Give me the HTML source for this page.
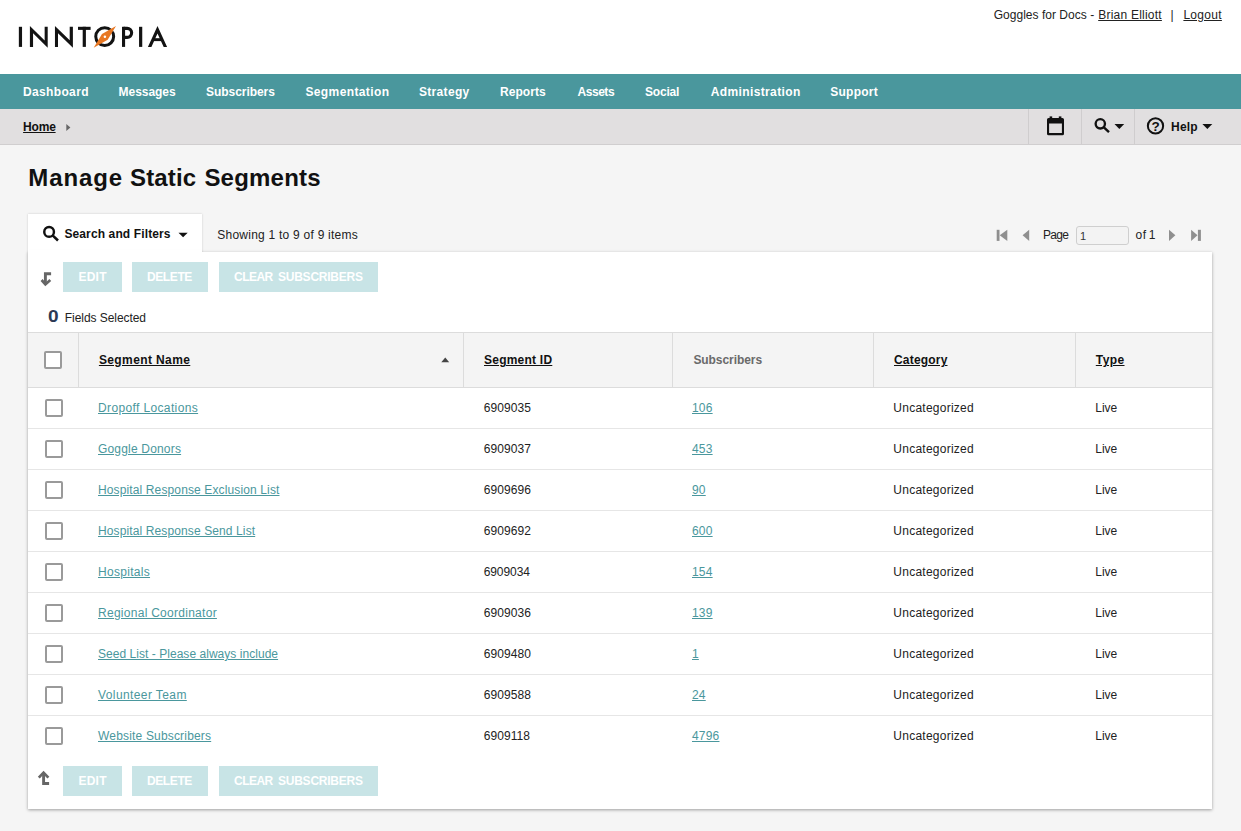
<!DOCTYPE html>
<html><head><meta charset="utf-8"><title>Manage Static Segments</title>
<style>
html,body{margin:0;padding:0}
body{width:1241px;height:831px;position:relative;overflow:hidden;background:#f5f5f5;font-family:"Liberation Sans",sans-serif;font-size:12px;color:#222}
.a{position:absolute}
.t{position:absolute;white-space:pre;font-family:"Liberation Sans",sans-serif}
#hdr{left:0;top:0;width:1241px;height:74px;background:#fff}
#nav{left:0;top:74px;width:1241px;height:35px;background:#4a979d}
#crumb{left:0;top:109px;width:1241px;height:35px;background:#e1dfe0;border-bottom:1px solid #d0cecf}
.vsep{top:109px;width:1px;height:35px;background:#cfcdce}
#tab{left:28px;top:214px;width:174px;height:40px;background:#fff;box-shadow:0 0 2px rgba(0,0,0,.18)}
#panel{left:28px;top:252px;width:1184px;height:557px;background:#fff;box-shadow:0 1px 3px rgba(0,0,0,.36)}
#tabcover{left:28px;top:250px;width:174px;height:6px;background:#fff}
.btn{height:30px;background:#c8e4e6}
#thead{left:28px;top:332px;width:1184px;height:54px;background:#f4f4f4;border-top:1px solid #dcdcdc;border-bottom:1px solid #dcdcdc}
.csep{top:333px;width:1px;height:54px;background:#dcdcdc}
.rsep{left:28px;width:1184px;height:1px;background:#e6e6e6}
.cb{width:14px;height:14px;border:2px solid #9a9a9a;border-radius:2px;background:#fff}
#pin{left:1076px;top:226px;width:51px;height:17px;border:1px solid #cfcfcf;border-radius:3px;background:#f3f3f3}
</style></head><body>
<div class="a" id="hdr"></div>
<div class="a" id="nav"></div>
<div class="a" id="crumb"></div>
<div class="a vsep" style="left:1028px"></div>
<div class="a vsep" style="left:1081px"></div>
<div class="a vsep" style="left:1134px"></div>
<div class="a" id="tab"></div>
<div class="a" id="panel"></div>
<div class="a" id="tabcover"></div>
<div class="a btn" style="left:63px;top:262px;width:59px"></div>
<div class="a btn" style="left:132px;top:262px;width:76px"></div>
<div class="a btn" style="left:219px;top:262px;width:159px"></div>
<div class="a btn" style="left:63px;top:766px;width:59px"></div>
<div class="a btn" style="left:132px;top:766px;width:76px"></div>
<div class="a btn" style="left:219px;top:766px;width:159px"></div>
<div class="a" id="thead"></div>
<div class="a csep" style="left:78px"></div>
<div class="a csep" style="left:463px"></div>
<div class="a csep" style="left:672px"></div>
<div class="a csep" style="left:873px"></div>
<div class="a csep" style="left:1075px"></div>
<div class="a rsep" style="top:428px"></div>
<div class="a rsep" style="top:469px"></div>
<div class="a rsep" style="top:510px"></div>
<div class="a rsep" style="top:551px"></div>
<div class="a rsep" style="top:592px"></div>
<div class="a rsep" style="top:633px"></div>
<div class="a rsep" style="top:674px"></div>
<div class="a rsep" style="top:715px"></div>
<div class="a cb" style="left:44px;top:351px"></div>
<div class="a cb" style="left:45px;top:399px"></div>
<div class="a cb" style="left:45px;top:440px"></div>
<div class="a cb" style="left:45px;top:481px"></div>
<div class="a cb" style="left:45px;top:522px"></div>
<div class="a cb" style="left:45px;top:563px"></div>
<div class="a cb" style="left:45px;top:604px"></div>
<div class="a cb" style="left:45px;top:645px"></div>
<div class="a cb" style="left:45px;top:686px"></div>
<div class="a cb" style="left:45px;top:727px"></div>
<div class="a" id="pin"></div>
<!--ICONS-START-->
<svg class="a" style="left:0;top:0" width="1241" height="831" viewBox="0 0 1241 831">
<!-- logo -->
<g fill="#131313">
<rect x="18.85" y="26.8" width="3.2" height="20.1"/>
<polygon points="29.9,25.9 29.9,46.9 33.06,46.9 33.06,33.37 47.7,47.8 47.7,26.8 44.66,26.8 44.66,40.45"/>
<polygon points="54.96,25.9 54.96,46.9 58.0,46.9 58.0,33.3 72.9,47.8 72.9,26.8 69.7,26.8 69.7,40.3"/>
<rect x="78" y="26.8" width="12.6" height="3.1"/>
<rect x="82.7" y="26.8" width="3.2" height="20.1"/>
<rect x="122" y="26.8" width="3.1" height="20.1"/>
<rect x="139.05" y="26.8" width="3.2" height="20.1"/>
<polygon points="147.9,46.9 157.5,25.9 167.1,46.9 163.7,46.9 157.5,33.4 151.4,46.9"/>
<rect x="153.5" y="38.2" width="8.2" height="2.9"/>
</g>
<circle cx="104.7" cy="36.6" r="8.95" fill="none" stroke="#131313" stroke-width="3"/>
<path d="M123.5 28.35 H127.15 a4.5 4.5 0 0 1 0 9 H123.5" fill="none" stroke="#131313" stroke-width="3.1"/>
<polygon points="93.7,47.8 102.0,33.9 116,25.9 107.7,39.8" fill="#e87722"/>
<circle cx="104.9" cy="36.8" r="1.25" fill="#fff"/>
<!-- breadcrumb arrow -->
<polygon points="66.3,124 70.4,127.5 66.3,131" fill="#666"/>
<!-- calendar -->
<g fill="#111">
<rect x="1049.6" y="116.4" width="2.6" height="3"/>
<rect x="1058.8" y="116.4" width="2.6" height="3"/>
<path fill-rule="evenodd" d="M1048.6 117.9 H1062.4 a1.6 1.6 0 0 1 1.6 1.6 V133.7 a1.6 1.6 0 0 1 -1.6 1.6 H1048.6 a1.6 1.6 0 0 1 -1.6 -1.6 V119.5 a1.6 1.6 0 0 1 1.6 -1.6 Z M1049.1 123.4 V133.1 H1061.9 V123.4 Z"/>
</g>
<!-- search (crumb) -->
<circle cx="1100.3" cy="123.8" r="4.65" fill="none" stroke="#111" stroke-width="2.35"/>
<line x1="1103.6" y1="127.1" x2="1109" y2="132.2" stroke="#111" stroke-width="2.4"/>
<polygon points="1114.5,124 1124.2,124 1119.35,128.9" fill="#111"/>
<!-- help -->
<circle cx="1155.5" cy="125.9" r="7.65" fill="none" stroke="#111" stroke-width="2"/>
<text x="1155.5" y="130.7" text-anchor="middle" font-family="Liberation Sans, sans-serif" font-weight="bold" font-size="13.5" fill="#111">?</text>
<polygon points="1202.4,124 1212.3,124 1207.35,128.9" fill="#111"/>
<!-- tab search -->
<circle cx="49.1" cy="231.9" r="4.85" fill="none" stroke="#111" stroke-width="2.45"/>
<line x1="52.6" y1="235.4" x2="58" y2="240.5" stroke="#111" stroke-width="2.6"/>
<polygon points="178.5,232.8 187.7,232.8 183.1,237.3" fill="#111"/>
<!-- pager -->
<g fill="#8f8f8f">
<rect x="996.7" y="229.8" width="2.8" height="11.1"/>
<polygon points="1007.3,229.8 1007.3,240.9 999.7,235.35"/>
<polygon points="1029.2,229.8 1029.2,240.9 1022.6,235.35"/>
<polygon points="1169,229.8 1169,240.9 1175.4,235.35"/>
<polygon points="1191.1,229.8 1191.1,240.9 1197.5,235.35"/>
<rect x="1197.9" y="229.8" width="3" height="11.1"/>
</g>
<!-- sort arrow -->
<polygon points="441.3,362.2 449.2,362.2 445.25,357.4" fill="#444"/>
<!-- level-down arrow -->
<g fill="none" stroke="#666" stroke-width="2.9">
<path d="M51.1 273.7 H45.4 V283.5"/>
<path d="M41.6 280 L45.4 284.4 L50.3 280" stroke-width="2.7"/>
<path d="M49.1 783.5 H43.6 V773.5"/>
<path d="M38.8 777.6 L43.55 772.6 L48.4 777.6" stroke-width="2.7"/>
</g>
</svg>
<!--ICONS-END-->
<span class="t" style="line-height:16px;left:993.70px;top:7px;font-size:12px;color:#222222;letter-spacing:0.024px;">Goggles for Docs -</span>
<span class="t" style="line-height:16px;left:1098.20px;top:7px;font-size:12px;color:#222222;letter-spacing:0.231px;text-decoration:underline;">Brian Elliott</span>
<span class="t" style="line-height:16px;left:1170.60px;top:7px;font-size:12px;color:#222222;">|</span>
<span class="t" style="line-height:16px;left:1183.40px;top:7px;font-size:12px;color:#222222;letter-spacing:0.299px;text-decoration:underline;">Logout</span>
<span class="t" style="line-height:16px;left:23.00px;top:84px;font-size:12px;color:#ffffff;font-weight:bold;letter-spacing:0.350px;">Dashboard</span>
<span class="t" style="line-height:16px;left:118.60px;top:84px;font-size:12px;color:#ffffff;font-weight:bold;letter-spacing:-0.057px;">Messages</span>
<span class="t" style="line-height:16px;left:206.00px;top:84px;font-size:12px;color:#ffffff;font-weight:bold;letter-spacing:-0.050px;">Subscribers</span>
<span class="t" style="line-height:16px;left:305.40px;top:84px;font-size:12px;color:#ffffff;font-weight:bold;letter-spacing:0.391px;">Segmentation</span>
<span class="t" style="line-height:16px;left:418.90px;top:84px;font-size:12px;color:#ffffff;font-weight:bold;letter-spacing:0.329px;">Strategy</span>
<span class="t" style="line-height:16px;left:499.90px;top:84px;font-size:12px;color:#ffffff;font-weight:bold;letter-spacing:0.083px;">Reports</span>
<span class="t" style="line-height:16px;left:577.50px;top:84px;font-size:12px;color:#ffffff;font-weight:bold;letter-spacing:-0.460px;">Assets</span>
<span class="t" style="line-height:16px;left:645.00px;top:84px;font-size:12px;color:#ffffff;font-weight:bold;letter-spacing:-0.180px;">Social</span>
<span class="t" style="line-height:16px;left:710.80px;top:84px;font-size:12px;color:#ffffff;font-weight:bold;letter-spacing:0.369px;">Administration</span>
<span class="t" style="line-height:16px;left:830.30px;top:84px;font-size:12px;color:#ffffff;font-weight:bold;letter-spacing:0.233px;">Support</span>
<span class="t" style="line-height:16px;left:23.10px;top:119px;font-size:12px;color:#111;font-weight:bold;letter-spacing:-0.211px;text-decoration:underline;">Home</span>
<span class="t" style="line-height:16px;left:1171.10px;top:119px;font-size:12px;color:#111;font-weight:bold;letter-spacing:0.167px;">Help</span>
<span class="t" style="line-height:34px;left:28.30px;top:161px;font-size:24px;color:#111;font-weight:bold;letter-spacing:0.880px;">Manage</span>
<span class="t" style="line-height:34px;left:130.00px;top:161px;font-size:24px;color:#111;font-weight:bold;letter-spacing:0.140px;">Static</span>
<span class="t" style="line-height:34px;left:204.40px;top:161px;font-size:24px;color:#111;font-weight:bold;letter-spacing:0.214px;">Segments</span>
<span class="t" style="line-height:16px;left:64.40px;top:226px;font-size:12px;color:#111;font-weight:bold;letter-spacing:0.124px;">Search and Filters</span>
<span class="t" style="line-height:16px;left:217.30px;top:227px;font-size:12px;color:#222222;letter-spacing:0.237px;">Showing 1 to 9 of 9 items</span>
<span class="t" style="line-height:16px;left:1043.00px;top:227px;font-size:12px;color:#222222;letter-spacing:-0.733px;">Page</span>
<span class="t" style="line-height:16px;left:1135.40px;top:227px;font-size:12px;color:#222222;letter-spacing:0.600px;">of</span>
<span class="t" style="line-height:16px;left:1148.70px;top:227px;font-size:12px;color:#222222;">1</span>
<span class="t" style="line-height:16px;left:1080.00px;top:228px;font-size:11px;color:#333;">1</span>
<span class="t" style="line-height:16px;left:78.40px;top:269px;font-size:12px;color:#ffffff;font-weight:bold;letter-spacing:0.267px;">EDIT</span>
<span class="t" style="line-height:16px;left:147.00px;top:269px;font-size:12px;color:#ffffff;font-weight:bold;letter-spacing:-0.400px;">DELETE</span>
<span class="t" style="line-height:16px;left:234.05px;top:269px;font-size:12px;color:#ffffff;font-weight:bold;letter-spacing:-0.538px;">CLEAR</span>
<span class="t" style="line-height:16px;left:278.00px;top:269px;font-size:12px;color:#ffffff;font-weight:bold;letter-spacing:-0.240px;">SUBSCRIBERS</span>
<span class="t" style="line-height:16px;left:78.40px;top:773px;font-size:12px;color:#ffffff;font-weight:bold;letter-spacing:0.267px;">EDIT</span>
<span class="t" style="line-height:16px;left:147.00px;top:773px;font-size:12px;color:#ffffff;font-weight:bold;letter-spacing:-0.400px;">DELETE</span>
<span class="t" style="line-height:16px;left:234.05px;top:773px;font-size:12px;color:#ffffff;font-weight:bold;letter-spacing:-0.538px;">CLEAR</span>
<span class="t" style="line-height:16px;left:278.00px;top:773px;font-size:12px;color:#ffffff;font-weight:bold;letter-spacing:-0.240px;">SUBSCRIBERS</span>
<span class="t" style="line-height:24px;left:48.00px;top:305px;font-size:17px;color:#2b3a55;font-weight:bold;transform:scaleX(1.12);transform-origin:0 0;">0</span>
<span class="t" style="line-height:16px;left:64.80px;top:310px;font-size:12px;color:#222222;letter-spacing:-0.057px;">Fields Selected</span>
<span class="t" style="line-height:16px;left:98.90px;top:352px;font-size:12px;color:#111;font-weight:bold;letter-spacing:0.391px;text-decoration:underline;">Segment Name</span>
<span class="t" style="line-height:16px;left:484.00px;top:352px;font-size:12px;color:#111;font-weight:bold;letter-spacing:0.228px;text-decoration:underline;">Segment ID</span>
<span class="t" style="line-height:16px;left:693.40px;top:352px;font-size:12px;color:#6a6a6a;font-weight:bold;letter-spacing:-0.070px;">Subscribers</span>
<span class="t" style="line-height:16px;left:894.00px;top:352px;font-size:12px;color:#111;font-weight:bold;letter-spacing:0.186px;text-decoration:underline;">Category</span>
<span class="t" style="line-height:16px;left:1095.80px;top:352px;font-size:12px;color:#111;font-weight:bold;letter-spacing:0.394px;text-decoration:underline;">Type</span>
<span class="t" style="line-height:16px;left:98.00px;top:400px;font-size:12px;color:#4a979d;letter-spacing:0.368px;text-decoration:underline;">Dropoff Locations</span>
<span class="t" style="line-height:16px;left:483.70px;top:400px;font-size:12px;color:#222222;letter-spacing:0.083px;">6909035</span>
<span class="t" style="line-height:16px;left:692.00px;top:400px;font-size:12px;color:#4a979d;letter-spacing:0.193px;text-decoration:underline;">106</span>
<span class="t" style="line-height:16px;left:893.30px;top:400px;font-size:12px;color:#222222;letter-spacing:0.250px;">Uncategorized</span>
<span class="t" style="line-height:16px;left:1095.30px;top:400px;font-size:12px;color:#222222;letter-spacing:-0.033px;">Live</span>
<span class="t" style="line-height:16px;left:98.00px;top:441px;font-size:12px;color:#4a979d;letter-spacing:0.183px;text-decoration:underline;">Goggle Donors</span>
<span class="t" style="line-height:16px;left:483.70px;top:441px;font-size:12px;color:#222222;letter-spacing:0.083px;">6909037</span>
<span class="t" style="line-height:16px;left:692.00px;top:441px;font-size:12px;color:#4a979d;letter-spacing:0.193px;text-decoration:underline;">453</span>
<span class="t" style="line-height:16px;left:893.30px;top:441px;font-size:12px;color:#222222;letter-spacing:0.250px;">Uncategorized</span>
<span class="t" style="line-height:16px;left:1095.30px;top:441px;font-size:12px;color:#222222;letter-spacing:-0.033px;">Live</span>
<span class="t" style="line-height:16px;left:98.00px;top:482px;font-size:12px;color:#4a979d;letter-spacing:0.127px;text-decoration:underline;">Hospital Response Exclusion List</span>
<span class="t" style="line-height:16px;left:483.70px;top:482px;font-size:12px;color:#222222;letter-spacing:0.083px;">6909696</span>
<span class="t" style="line-height:16px;left:692.00px;top:482px;font-size:12px;color:#4a979d;letter-spacing:0.190px;text-decoration:underline;">90</span>
<span class="t" style="line-height:16px;left:893.30px;top:482px;font-size:12px;color:#222222;letter-spacing:0.250px;">Uncategorized</span>
<span class="t" style="line-height:16px;left:1095.30px;top:482px;font-size:12px;color:#222222;letter-spacing:-0.033px;">Live</span>
<span class="t" style="line-height:16px;left:98.00px;top:523px;font-size:12px;color:#4a979d;letter-spacing:0.115px;text-decoration:underline;">Hospital Response Send List</span>
<span class="t" style="line-height:16px;left:483.70px;top:523px;font-size:12px;color:#222222;letter-spacing:0.083px;">6909692</span>
<span class="t" style="line-height:16px;left:692.00px;top:523px;font-size:12px;color:#4a979d;letter-spacing:0.193px;text-decoration:underline;">600</span>
<span class="t" style="line-height:16px;left:893.30px;top:523px;font-size:12px;color:#222222;letter-spacing:0.250px;">Uncategorized</span>
<span class="t" style="line-height:16px;left:1095.30px;top:523px;font-size:12px;color:#222222;letter-spacing:-0.033px;">Live</span>
<span class="t" style="line-height:16px;left:98.00px;top:564px;font-size:12px;color:#4a979d;letter-spacing:0.299px;text-decoration:underline;">Hospitals</span>
<span class="t" style="line-height:16px;left:483.70px;top:564px;font-size:12px;color:#222222;letter-spacing:-0.083px;">6909034</span>
<span class="t" style="line-height:16px;left:692.00px;top:564px;font-size:12px;color:#4a979d;letter-spacing:0.193px;text-decoration:underline;">154</span>
<span class="t" style="line-height:16px;left:893.30px;top:564px;font-size:12px;color:#222222;letter-spacing:0.250px;">Uncategorized</span>
<span class="t" style="line-height:16px;left:1095.30px;top:564px;font-size:12px;color:#222222;letter-spacing:-0.033px;">Live</span>
<span class="t" style="line-height:16px;left:98.00px;top:605px;font-size:12px;color:#4a979d;letter-spacing:0.275px;text-decoration:underline;">Regional Coordinator</span>
<span class="t" style="line-height:16px;left:483.70px;top:605px;font-size:12px;color:#222222;letter-spacing:0.083px;">6909036</span>
<span class="t" style="line-height:16px;left:692.00px;top:605px;font-size:12px;color:#4a979d;letter-spacing:0.193px;text-decoration:underline;">139</span>
<span class="t" style="line-height:16px;left:893.30px;top:605px;font-size:12px;color:#222222;letter-spacing:0.250px;">Uncategorized</span>
<span class="t" style="line-height:16px;left:1095.30px;top:605px;font-size:12px;color:#222222;letter-spacing:-0.033px;">Live</span>
<span class="t" style="line-height:16px;left:98.00px;top:646px;font-size:12px;color:#4a979d;letter-spacing:0.040px;text-decoration:underline;">Seed List - Please always include</span>
<span class="t" style="line-height:16px;left:483.70px;top:646px;font-size:12px;color:#222222;letter-spacing:0.083px;">6909480</span>
<span class="t" style="line-height:16px;left:692.00px;top:646px;font-size:12px;color:#4a979d;letter-spacing:0.183px;text-decoration:underline;">1</span>
<span class="t" style="line-height:16px;left:893.30px;top:646px;font-size:12px;color:#222222;letter-spacing:0.250px;">Uncategorized</span>
<span class="t" style="line-height:16px;left:1095.30px;top:646px;font-size:12px;color:#222222;letter-spacing:-0.033px;">Live</span>
<span class="t" style="line-height:16px;left:98.00px;top:687px;font-size:12px;color:#4a979d;letter-spacing:0.402px;text-decoration:underline;">Volunteer Team</span>
<span class="t" style="line-height:16px;left:483.70px;top:687px;font-size:12px;color:#222222;letter-spacing:0.083px;">6909588</span>
<span class="t" style="line-height:16px;left:692.00px;top:687px;font-size:12px;color:#4a979d;letter-spacing:0.190px;text-decoration:underline;">24</span>
<span class="t" style="line-height:16px;left:893.30px;top:687px;font-size:12px;color:#222222;letter-spacing:0.250px;">Uncategorized</span>
<span class="t" style="line-height:16px;left:1095.30px;top:687px;font-size:12px;color:#222222;letter-spacing:-0.033px;">Live</span>
<span class="t" style="line-height:16px;left:98.00px;top:728px;font-size:12px;color:#4a979d;letter-spacing:0.177px;text-decoration:underline;">Website Subscribers</span>
<span class="t" style="line-height:16px;left:483.70px;top:728px;font-size:12px;color:#222222;letter-spacing:0.083px;">6909118</span>
<span class="t" style="line-height:16px;left:692.00px;top:728px;font-size:12px;color:#4a979d;letter-spacing:0.194px;text-decoration:underline;">4796</span>
<span class="t" style="line-height:16px;left:893.30px;top:728px;font-size:12px;color:#222222;letter-spacing:0.250px;">Uncategorized</span>
<span class="t" style="line-height:16px;left:1095.30px;top:728px;font-size:12px;color:#222222;letter-spacing:-0.033px;">Live</span>
</body></html>
